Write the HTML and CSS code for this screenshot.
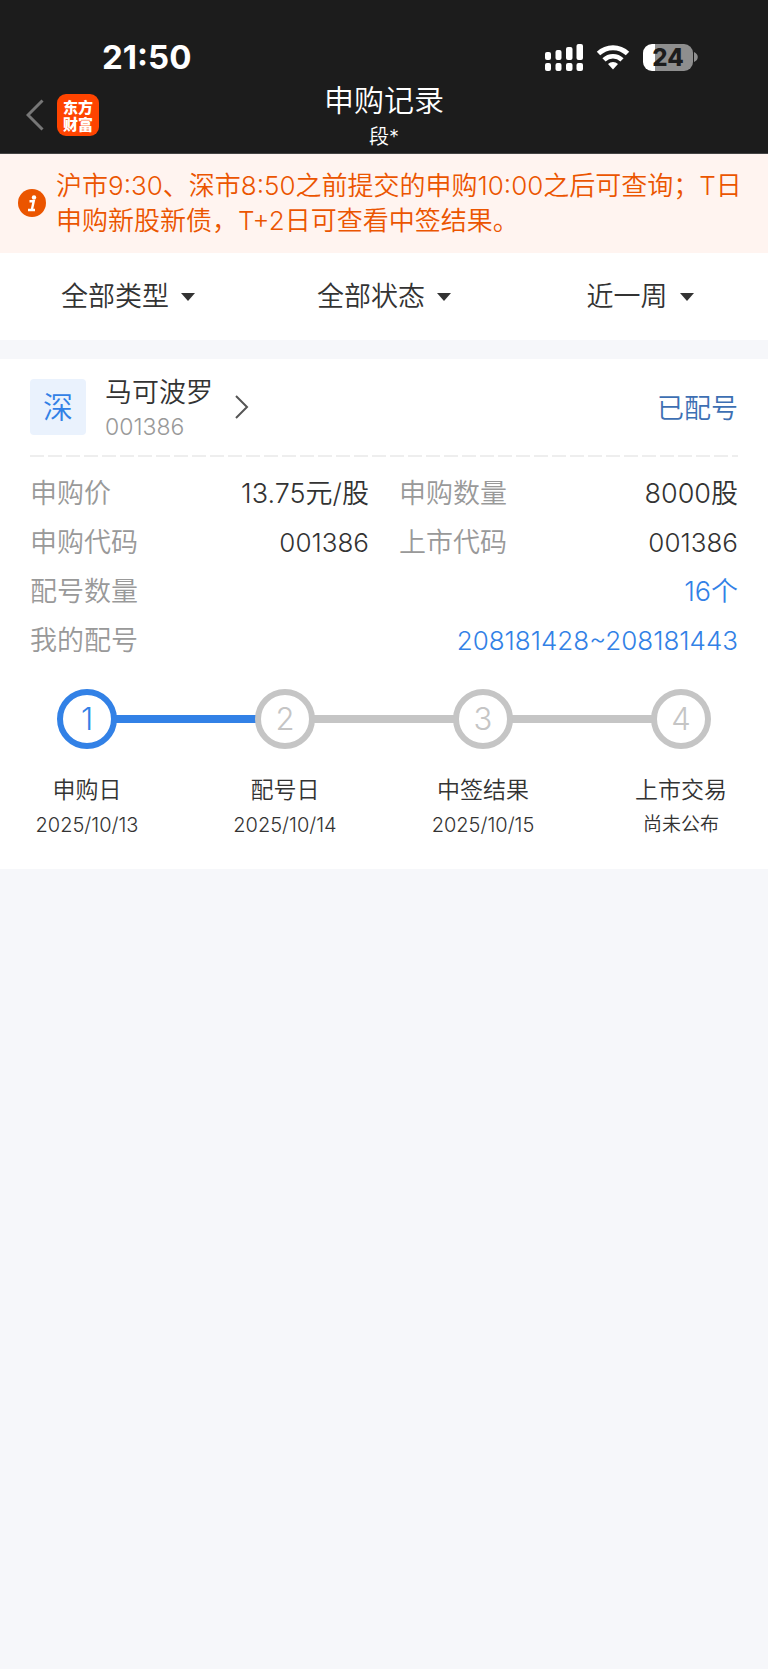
FILE: index.html
```
<!DOCTYPE html>
<html lang="zh-CN">
<head>
    <meta charset="UTF-8">
    <meta name="viewport" content="width=device-width, initial-scale=1.0">
    <title>申购记录</title>
    <link rel="stylesheet" href="styles.css">
</head>
<body>
    <header class="header">
        <div class="status-bar">
            <span class="time">21:50</span>
            <div class="status-icons">
                <svg width="38" height="27" viewBox="0 0 38 27" fill="#fff">
                    <rect x="0" y="8" width="6" height="8" rx="2"/>
                    <rect x="10.500" y="6" width="6" height="10" rx="2"/>
                    <rect x="21" y="3" width="6.500" height="13" rx="2"/>
                    <rect x="31.500" y="0" width="6.500" height="16" rx="2"/>
                    <rect x="0" y="19" width="6" height="8" rx="2"/>
                    <rect x="10.500" y="19" width="6" height="8" rx="2"/>
                    <rect x="21" y="19" width="6.500" height="8" rx="2"/>
                    <rect x="31.500" y="19" width="6.500" height="8" rx="2"/>
                </svg>
                <svg width="34" height="26" viewBox="0 0 34 26">
                    <path d="M2.500 9.500a21 21 0 0 1 29 0" fill="none" stroke="#fff" stroke-width="5"/>
                    <path d="M8 15.800a13 13 0 0 1 18 0" fill="none" stroke="#fff" stroke-width="4.600"/>
                    <path d="M17 25.500l-5-5.500a7.500 7.500 0 0 1 10 0z" fill="#fff"/>
                </svg>
                <div class="battery">
                    <span class="battery-level">24</span>
                    <svg width="4" height="10" viewBox="0 0 4 10"><path d="M0 0c5 2 5 8 0 10z" fill="#8e8e8e"/></svg>
                </div>
            </div>
        </div>
        <nav class="nav">
            <div class="nav-left">
                <button class="back" aria-label="返回">
                    <svg width="18" height="32" viewBox="0 0 18 32"><path d="M16.500 1.500L2 16l14.500 14.500" fill="none" stroke="#777" stroke-width="3"/></svg>
                </button>
                <a href="#" class="logo">东方财富</a>
            </div>
            <div class="nav-title">
                <h1>申购记录</h1>
                <p>段*</p>
            </div>
        </nav>
    </header>

    <div class="notice">
        <svg class="notice-icon" width="28" height="28" viewBox="0 0 28 28">
            <circle cx="14" cy="14" r="14" fill="#eb5500"/>
            <circle cx="16" cy="8.500" r="2.200" fill="#fff"/>
            <path d="M11.500 12.300h4.200L13.800 21M10 21h7" fill="none" stroke="#fff" stroke-width="2.400"/>
        </svg>
        <p>沪市9:30、深市8:50之前提交的申购10:00之后可查询；T日申购新股新债，T+2日可查看中签结果。</p>
    </div>

    <div class="filters">
        <label class="filter">
            <select aria-label="类型"><option>全部类型</option></select>
            <svg width="14" height="8" viewBox="0 0 14 8"><path d="M0 0h14L7 8z" fill="#333"/></svg>
        </label>
        <label class="filter">
            <select aria-label="状态"><option>全部状态</option></select>
            <svg width="14" height="8" viewBox="0 0 14 8"><path d="M0 0h14L7 8z" fill="#333"/></svg>
        </label>
        <label class="filter">
            <select aria-label="时间"><option>近一周</option></select>
            <svg width="14" height="8" viewBox="0 0 14 8"><path d="M0 0h14L7 8z" fill="#333"/></svg>
        </label>
    </div>

    <main class="card">
        <div class="card-head">
            <span class="market">深</span>
            <a href="#" class="stock">
                <span class="stock-text">
                    <span class="stock-name">马可波罗</span>
                    <span class="stock-code">001386</span>
                </span>
                <svg width="14" height="24" viewBox="0 0 14 24"><path d="M1 1l11 11L1 23" fill="none" stroke="#555" stroke-width="2"/></svg>
            </a>
            <span class="state">已配号</span>
        </div>

        <dl class="details">
            <div class="row"><dt>申购价</dt><dd>13.75元/股</dd></div>
            <div class="row"><dt>申购数量</dt><dd>8000股</dd></div>
            <div class="row"><dt>申购代码</dt><dd class="code">001386</dd></div>
            <div class="row"><dt>上市代码</dt><dd class="code">001386</dd></div>
            <div class="row wide"><dt>配号数量</dt><dd><a href="#">16个</a></dd></div>
            <div class="row wide"><dt>我的配号</dt><dd class="code"><a href="#">208181428~208181443</a></dd></div>
        </dl>

        <ol class="steps">
            <li class="step active">
                <span class="step-num">1</span>
                <span class="step-name">申购日</span>
                <time class="step-date">2025/10/13</time>
            </li>
            <li class="step">
                <span class="step-num">2</span>
                <span class="step-name">配号日</span>
                <time class="step-date">2025/10/14</time>
            </li>
            <li class="step">
                <span class="step-num">3</span>
                <span class="step-name">中签结果</span>
                <time class="step-date">2025/10/15</time>
            </li>
            <li class="step">
                <span class="step-num">4</span>
                <span class="step-name">上市交易</span>
                <span class="step-date pending">尚未公布</span>
            </li>
        </ol>
    </main>
</body>
</html>
```
FILE: styles.css
```
* {
    box-sizing: border-box;
}
body {
    margin: 0;
    font-family: Inter, "Noto Sans CJK SC", sans-serif;
    font-size: 27px;
    font-weight: 350;
    background-color: #f6f7fa;
    color: #333;
}
h1, p, dl, dd, ol {
    margin: 0;
    padding: 0;
}
a {
    color: inherit;
    text-decoration: none;
}
svg {
    display: block;
    flex: none;
}

/* header */
.header {
    background-color: #1c1c1c;
    color: #fff;
    padding-top: 34px;
    border-bottom: 1px solid #444;
}
.status-bar {
    display: flex;
    justify-content: space-between;
    align-items: center;
    height: 46px;
    padding: 0 70px 0 102px;
}
.time {
    font-size: 33px;
    font-weight: 700;
}
.status-icons {
    display: flex;
    align-items: center;
    gap: 13px;
}
.battery {
    display: flex;
    align-items: center;
    gap: 1px;
}
.battery-level {
    width: 50px;
    height: 27px;
    border-radius: 9px;
    background: linear-gradient(90deg, #fff 24%, #8e8e8e 24%);
    color: #1c1c1c;
    font-size: 24px;
    font-weight: 800;
    line-height: 27px;
    text-align: center;
}
.nav {
    display: grid;
    grid-template-columns: 1fr auto 1fr;
    align-items: start;
    height: 73px;
}
.nav-left {
    display: flex;
    align-items: center;
    gap: 13px;
    padding: 14px 0 0 26px;
}
.back {
    padding: 0;
    border: none;
    background: none;
    cursor: pointer;
}
.logo {
    width: 42px;
    height: 42px;
    padding: 4px 5px;
    border-radius: 9px;
    background-color: #ff4400;
    font-family: "Noto Sans CJK SC", sans-serif;
    font-size: 15px;
    font-weight: 900;
    line-height: 17px;
    text-align: center;
}
.nav-title {
    text-align: center;
}
.nav-title h1 {
    font-size: 30px;
    font-weight: 350;
    line-height: 40px;
}
.nav-title p {
    font-size: 20px;
    line-height: 34px;
}

/* notice */
.notice {
    display: flex;
    align-items: center;
    gap: 10px;
    padding: 14px 18px 15px;
    background-color: #fff4f0;
    color: #eb5500;
    font-size: 26px;
    line-height: 35px;
}

/* filters */
.filters {
    display: grid;
    grid-template-columns: repeat(3, 1fr);
    height: 87px;
    margin-bottom: 19px;
    background-color: #fff;
}
.filter {
    display: flex;
    justify-content: center;
    align-items: center;
    gap: 12px;
}
.filter select {
    appearance: none;
    padding: 0;
    border: none;
    background: none;
    color: inherit;
    font: inherit;
    cursor: pointer;
}

/* card */
.card {
    padding: 19px 30px 27px;
    background-color: #fff;
}
.card-head {
    display: flex;
    align-items: center;
    height: 79px;
    padding-bottom: 22px;
    background: repeating-linear-gradient(90deg, #eee 0 14px, transparent 14px 18px) left bottom / 100% 2px no-repeat;
}
.market {
    width: 56px;
    height: 56px;
    margin-right: 19px;
    border-radius: 4px;
    background-color: #eaf2fd;
    color: #3281e6;
    font-size: 30px;
    line-height: 56px;
    text-align: center;
}
.stock {
    display: flex;
    align-items: center;
    gap: 22px;
}
.stock-text {
    display: flex;
    flex-direction: column;
    padding-top: 4px;
}
.stock-name {
    line-height: 36px;
}
.stock-code {
    color: #999;
    font-size: 23px;
    line-height: 32px;
}
.state {
    margin-left: auto;
    color: #3d6fb3;
}
.details {
    display: grid;
    grid-template-columns: 1fr 1fr;
    column-gap: 30px;
    padding: 12px 0;
}
.row {
    display: flex;
    justify-content: space-between;
    line-height: 49px;
}
.wide {
    grid-column: 1 / 3;
}
dt {
    color: #999;
}
dd a {
    color: #3281e6;
}
.code {
    font-size: 26px;
}

/* steps */
.steps {
    display: flex;
    justify-content: space-between;
    list-style: none;
    padding-top: 12px;
}
.step {
    position: relative;
    display: flex;
    flex-direction: column;
    align-items: center;
    width: 114px;
}
.step-num {
    width: 60px;
    height: 60px;
    margin-bottom: 23px;
    border: 6px solid #c5c5c5;
    border-radius: 50%;
    background-color: #fff;
    color: #c5c5c5;
    font-size: 31px;
    font-weight: 300;
    line-height: 48px;
    text-align: center;
    z-index: 1;
}
.step-name {
    font-size: 23px;
    line-height: 36px;
}
.step-date {
    font-size: 20px;
    line-height: 34px;
}
.pending {
    font-size: 19px;
}
/* line to the next step */
.step:not(:last-child)::after {
    content: "";
    position: absolute;
    top: 26px;
    left: 50%;
    width: calc((100vw - 174px) / 3);
    height: 8px;
    background-color: #c5c5c5;
}
.active .step-num {
    border-color: #3281e6;
    color: #3281e6;
}
.step.active::after {
    background-color: #3281e6;
}
```
